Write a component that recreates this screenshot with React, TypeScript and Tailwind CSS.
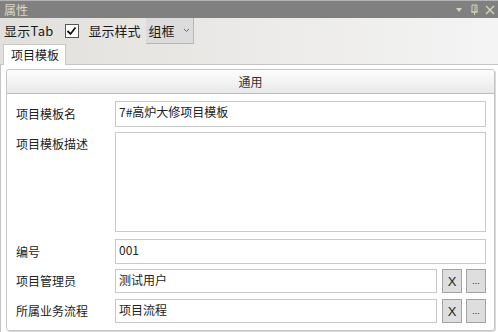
import React from "react";

const font = { fontFamily: '"Noto Sans CJK SC", "Noto Sans", sans-serif' };

function Field({ value, className = "" }: { value?: string; className?: string }) {
  return (
    <div
      className={`flex-1 border border-[#c9c9c9] bg-white px-[3px] pt-[1px] text-[12px] leading-[18px] text-[#222] ${className}`}
    >
      {value}
    </div>
  );
}

function SmallButton({ children }: { children: React.ReactNode }) {
  return (
    <div
      className="flex h-full w-[20px] items-center justify-center border border-[#a3a3a3] bg-[#dedede] text-[13px] leading-none text-[#222]"
      style={{ fontFamily: '"Liberation Sans", sans-serif' }}
    >
      {children}
    </div>
  );
}

function Row({
  label,
  children,
  height,
  top = false,
  className = "",
}: {
  label: string;
  children: React.ReactNode;
  height: string;
  top?: boolean;
  className?: string;
}) {
  return (
    <div className={`flex ${height} ${className}`}>
      <div
        className={`flex w-[99px] shrink-0 text-[12px] text-[#222] ${top ? "items-start pt-[3px]" : "items-center"}`}
      >
        {label}
      </div>
      <div className="flex flex-1 gap-[4px]">{children}</div>
    </div>
  );
}

export default function App() {
  return (
    <div className="flex h-[332px] w-[498px] flex-col overflow-hidden bg-white" style={font}>
      {/* title bar */}
      <div className="flex h-[18px] shrink-0 items-center border-t border-[#b4b4b4] bg-[#808080] pl-[4px] pr-[3px]">
        <span className="text-[12px] leading-none text-[#d8d8c4]">属性</span>
        <div className="ml-auto flex items-center gap-[6px] text-[#d4d4b8]">
          <svg width="10" height="8" viewBox="0 0 10 8">
            <path d="M2 2h6L5 6z" fill="currentColor" />
          </svg>
          <svg width="9" height="12" viewBox="0 0 9 12">
            <path d="M2 1h5v7H2zM1 8h7M4.5 8v3" stroke="currentColor" fill="none" strokeWidth="1" />
            <path d="M5 1v7" stroke="currentColor" strokeWidth="1" />
          </svg>
          <svg width="10" height="10" viewBox="0 0 10 10">
            <path d="M1 1l8 8M9 1l-8 8" stroke="currentColor" strokeWidth="1.4" />
          </svg>
        </div>
      </div>

      {/* toolbar + tab strip */}
      <div className="flex shrink-0 flex-col bg-gradient-to-r from-[#e2e0dc] to-[#f4f4f4]">
        <div className="flex h-[26px] items-stretch pl-[4px]">
          <span className="flex items-center text-[13px] tracking-[0.3px] text-[#1a1a1a]">显示Tab</span>
          <div className="ml-[11px] flex items-center">
            <div className="flex h-[14px] w-[14px] items-center justify-center border border-[#555] bg-white">
              <svg width="11" height="10" viewBox="0 0 11 10">
                <path d="M1.5 5l3 3L9.5 1.5" stroke="#111" strokeWidth="1.8" fill="none" />
              </svg>
            </div>
          </div>
          <span className="ml-[10px] flex items-center text-[13px] text-[#1a1a1a]">显示样式</span>
          <div className="ml-[5px] flex w-[48px] items-center border-r border-b border-[#b6b6b6] bg-[#dcdcdc] pl-[3px]">
            <span className="text-[13px] text-[#1a1a1a]">组框</span>
            <svg className="ml-[8px]" width="7" height="5" viewBox="0 0 7 5">
              <path d="M1 1l2.5 2.5L6 1" stroke="#666" fill="none" strokeWidth="1" />
            </svg>
          </div>
        </div>
        <div className="flex h-[21px] items-end border-b border-[#c4c4c4] pl-[3px]">
          <div className="-mb-px flex h-[21px] w-[63px] items-center border-x border-t border-[#c8c8c8] bg-white pl-[7px] text-[12px] text-[#1a1a1a]">
            项目模板
          </div>
        </div>
      </div>

      {/* content */}
      <div className="flex flex-1 flex-col border-l border-[#c4c4c4] pb-[1px] pl-[5px] pr-[3px] pt-[4px]">
        <div className="flex flex-1 flex-col rounded-[3px] border border-[#c6c6c6] shadow-[1px_1px_0_#d8d8d8]">
          <div className="flex h-[24px] shrink-0 items-center justify-center rounded-t-[3px] border-b border-[#bcbcbc] bg-gradient-to-b from-[#fdfdfd] to-[#e9e9e9] text-[12px] text-[#333]">
            通用
          </div>
          <div className="flex flex-col pl-[9px] pr-[8px] pt-[7px]">
            <Row label="项目模板名" height="h-[26px]">
              <Field value="7#高炉大修项目模板" />
            </Row>
            <Row label="项目模板描述" height="h-[100px]" top className="mt-[5px]">
              <Field />
            </Row>
            <Row label="编号" height="h-[25px]" className="mt-[7px]">
              <Field value="001" />
            </Row>
            <Row label="项目管理员" height="h-[24px]" className="mt-[5px]">
              <Field value="测试用户" className="mr-[1px]" />
              <SmallButton>X</SmallButton>
              <SmallButton>
                <span className="text-[9px] leading-none">...</span>
              </SmallButton>
            </Row>
            <Row label="所属业务流程" height="h-[24px]" className="mt-[6px]">
              <Field value="项目流程" className="mr-[1px]" />
              <SmallButton>X</SmallButton>
              <SmallButton>
                <span className="text-[9px] leading-none">...</span>
              </SmallButton>
            </Row>
          </div>
        </div>
      </div>
    </div>
  );
}
